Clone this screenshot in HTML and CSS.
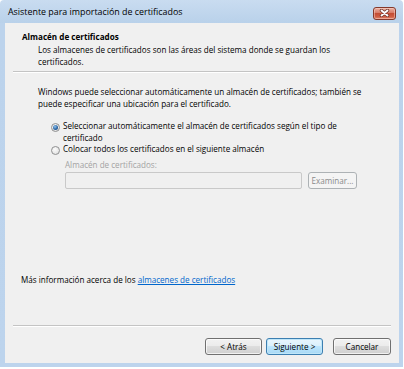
FILE: index.html
```html
<!DOCTYPE html>
<html lang="es">
<head>
<meta charset="utf-8">
<title>Asistente para importación de certificados</title>
<link rel="stylesheet" href="styles.css">
</head>
<body>
<div class="window">
  <div class="titlebar">
    <span class="title">Asistente para importación de certificados</span>
    <span class="close"><svg width="11" height="8" viewBox="0 0 11 8"><path d="M2.5 1.5 L8.5 6.5 M8.5 1.5 L2.5 6.5" stroke="#6b3328" stroke-width="3.4" stroke-linecap="round"/><path d="M2.5 1.5 L8.5 6.5 M8.5 1.5 L2.5 6.5" stroke="#fff" stroke-width="1.9" stroke-linecap="round"/></svg></span>
  </div>
  <div class="content">
    <div class="header">
      <div class="h-title">Almacén de certificados</div>
      <div class="h-desc">Los almacenes de certificados son las áreas del sistema donde se guardan los<br>certificados.</div>
    </div>
    <div class="sep"></div>
    <div class="body">
      <p class="intro">Windows puede seleccionar automáticamente un almacén de certificados; también se<br>puede especificar una ubicación para el certificado.</p>
      <div class="radio-row first"><span class="radio checked"></span><span class="radio-text">Seleccionar automáticamente el almacén de certificados según el tipo de<br>certificado</span></div>
      <div class="radio-row"><span class="radio"></span><span class="radio-text">Colocar todos los certificados en el siguiente almacén</span></div>
      <div class="store">
        <div class="store-label">Almacén de certificados:</div>
        <div class="store-row"><div class="textbox"></div><div class="btn disabled browse">Examinar...</div></div>
      </div>
      <p class="more">Más información acerca de los <a class="link" href="#">almacenes de certificados</a></p>
    </div>
    <div class="sep"></div>
    <div class="footer">
      <div class="btn back">&lt; Atrás</div>
      <div class="btn default next">Siguiente &gt;</div>
      <div class="btn cancel">Cancelar</div>
    </div>
  </div>
</div>
</body>
</html>
```

FILE: styles.css
```css
* { box-sizing: border-box; }
html, body { margin: 0; padding: 0; background: #ffffff; }
body {
  font-family: "Open Sans", "Noto Sans", sans-serif;
  font-size: 8.1px;
  line-height: 12px;
  color: #000;
}
.window {
  width: 403px;
  height: 367px;
  padding: 0 4px 4px 5px;
  background: linear-gradient(#c9dcf0, #b9d1ea 23px, #bcd3ec 23px, #bdd4ed);
  border-radius: 4px 4px 0 0;
  display: flex;
  flex-direction: column;
}
.titlebar {
  height: 23px;
  display: flex;
  align-items: center;
  padding-left: 3px;
  padding-right: 3px;
}
.title {
  font-size: 8.9px;
  color: #000;
  flex: 1;
}
.close {
  width: 23px;
  height: 13px;
  margin-top: 3px;
  border: 1px solid #84392b;
  border-radius: 3px;
  background: linear-gradient(#eab0a2, #d77a66 45%, #c44d34 50%, #cf5e44 80%, #e08a70);
  display: flex;
  align-items: center;
  justify-content: center;
  box-shadow: inset 0 0 0 1px rgba(255,220,210,0.45);
}
.content {
  flex: 1;
  background: #f0f0f0;
  display: flex;
  flex-direction: column;
}
.header { padding: 8px 0 0 17px; }
.h-title { font-weight: 700; }
.h-desc { margin-top: 1px; padding-left: 16px; }
.sep {
  height: 2px;
  margin: 3px 8px 0;
  border-top: 1px solid #c4c4c4;
  border-bottom: 1px solid #ffffff;
}
.body {
  flex: 1;
  display: flex;
  flex-direction: column;
  padding-left: 33px;
}
.intro { margin: 13px 0 0; }
.radio-row {
  display: flex;
  align-items: flex-start;
  line-height: 11.5px;
  margin-left: 13px;
}
.radio-row.first { margin-top: 10px; }
.radio {
  width: 9px;
  height: 9px;
  margin-top: 3px;
  margin-right: 3px;
  border-radius: 50%;
  border: 1px solid #8f9091;
  background: radial-gradient(circle at 40% 35%, #fbfbfb, #dcdcdc);
  display: flex;
  align-items: center;
  justify-content: center;
  flex: none;
}
.radio.checked::after {
  content: "";
  width: 5px;
  height: 5px;
  border-radius: 50%;
  background: radial-gradient(circle at 40% 35%, #8fc2ee, #25609f 60%, #173f73);
}
.store { margin-left: 27px; }
.store-label { margin-top: 4px; color: #a3a3a3; }
.store-row { display: flex; margin-top: 1px; gap: 6px; }
.textbox {
  width: 237px;
  height: 17px;
  border: 1px solid #c9c9c9;
  border-radius: 2px;
  background: #f0f0f0;
}
.btn {
  height: 17px;
  display: flex;
  align-items: center;
  justify-content: center;
  border: 1px solid #707070;
  border-radius: 3px;
  background: linear-gradient(#f2f2f2, #ebebeb 50%, #dddddd 50%, #cfcfcf);
  box-shadow: inset 0 0 0 1px rgba(255,255,255,0.7);
  color: #000;
}
.btn.disabled {
  border-color: #adb2b5;
  background: #f4f4f4;
  color: #8a8a8a;
  box-shadow: none;
}
.browse { width: 49px; }
.more { margin: auto 0 36px -17px; }
.link { color: #0066cc; text-decoration: underline; }
.footer {
  height: 36px;
  display: flex;
  justify-content: flex-end;
  padding: 11px 8px 0 0;
}
.back { width: 57px; }
.next {
  width: 57px;
  margin-left: 4px;
  border-color: #3c7fb1;
  box-shadow: inset 0 0 0 1px #bfe6f9;
  background: linear-gradient(#eaf6fd, #d9f0fc 50%, #bee6fd 50%, #a7d9f5);
}
.cancel { width: 58px; margin-left: 10px; }
```
